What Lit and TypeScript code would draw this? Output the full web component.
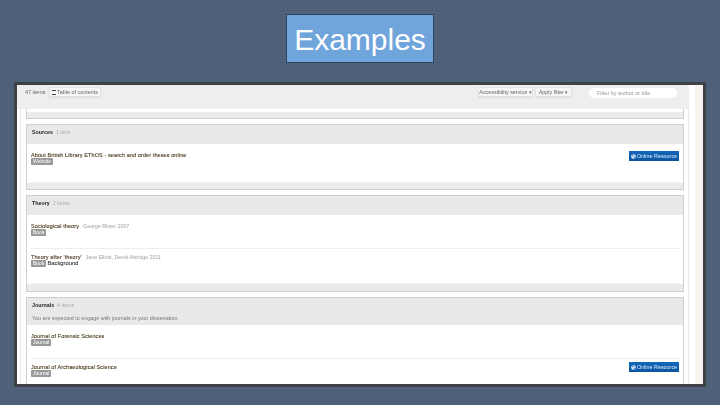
import { LitElement, html, css, svg } from "lit";
import { customElement } from "lit/decorators.js";

const globe = svg`<svg class="globe" viewBox="0 0 10 10" aria-hidden="true"><circle cx="5" cy="5" r="4.6" fill="#e8f2fb"/><path d="M3 1.5 L5.4 2.4 L4.6 4.2 L2.4 4.6 Z M5.6 5 L8 5.6 L6.6 8.6 L5.4 7.4 Z" fill="#1560ad"/></svg>`;

interface Item { title: string; meta?: string; tag: string; note?: string; link?: boolean; h: number; }

@customElement("app-root")
export class AppRoot extends LitElement {
  static styles = css`
    :host { display: block; width: 720px; height: 405px; overflow: hidden; background: #4f6179; font-family: "Liberation Sans", Arial, sans-serif; }
    .title { box-sizing: border-box; width: 148px; height: 49px; margin: 14px auto 0; background: #6fa5db; border: 1px solid #2e4560; color: #fff; font-size: 30px; line-height: 49px; text-align: center; }
    .frame { box-sizing: border-box; display: flex; width: 692px; height: 305px; margin: 19px 0 0 14px; border: 3px solid #3e4145; overflow: hidden; background: #fff; }
    .main { width: 672px; flex: none; filter: blur(0.4px); }
    .gutter { flex: 1; display: flex; }
    .gutter .w { width: 6px; background: #fff; }
    .gutter .c { flex: 1; background: #f9f4ee; }
    .top { box-sizing: border-box; height: 24px; background: #eeeeee; display: flex; align-items: flex-start; padding: 2px 12px 0 8px; color: #666; font-size: 5.4px; }
    .count { margin: 1.5px 3px 0 0; line-height: 7px; width: 21px; white-space: nowrap; }
    .btn { box-sizing: border-box; height: 10px; line-height: 9px; background: #f6f6f6; border: 1px solid #e2e2e2; border-radius: 1px; color: #666; text-align: center; white-space: nowrap; box-shadow: 0 1px 1px #ddd; }
    .toc { width: 52px; }
    .toc i { display: inline-block; width: 4px; height: 3px; border-top: 1px solid #444; border-bottom: 1px solid #444; margin-right: 1px; vertical-align: -0.5px; }
    .spacer { flex: 1; }
    .b1 { width: 55px; margin-right: 2px; }
    .b2 { width: 37px; }
    .filter { box-sizing: border-box; width: 88px; height: 10px; margin: 1px 0 0 17px; background: #fff; border-radius: 5px; padding-left: 8px; line-height: 10px; color: #999; font-size: 5.5px; white-space: nowrap; }
    .content { height: 275px; overflow: hidden; background: #fff; margin-left: 3px; border-left: 1px solid #e8e8e8; border-right: 1px solid #e8e8e8; padding: 0 4px 0 5px; display: flex; flex-direction: column; gap: 5px; }
    .stub { box-sizing: border-box; height: 10px; padding-top: 3px; border: 1px solid #cfcfcf; border-top: 0; flex: none; background: linear-gradient(#fff 3px, #ebebeb 3px); }
    .card { flex: none; box-sizing: border-box; border: 1px solid #cfcfcf; background: #fff; }
    .head { background: #e9e9e9; padding: 0 5px; height: 19px; line-height: 14.5px; color: #222; font-size: 5.3px; font-weight: bold; white-space: nowrap; }
    .head span { font-weight: normal; color: #aaa; margin-left: 3px; }
    .head.tall { height: 27px; }
    .head p { margin: 0; font-weight: normal; color: #777; line-height: 8px; margin-top: 1px; font-size: 5.4px; }
    .foot { height: 6px; background: #ebebeb; }
    .foot.big { height: 7px; }
    .row { box-sizing: border-box; margin: 0 3px 0 4px; display: flex; justify-content: space-between; align-items: flex-start; border-bottom: 1px solid #eeeeee; padding-top: 7px; }
    .row + .row { padding-top: 4px; }
    .row + .row .res { margin-top: -1px; }
    .row:last-of-type { border-bottom: 0; }
    .t { font-size: 5.5px; line-height: 8px; color: #4f4023; font-weight: normal; white-space: nowrap; letter-spacing: .1px; height: 7px; -webkit-text-stroke: 0.12px #4f4023; }
    .t span { color: #a0a0a0; margin-left: 4px; letter-spacing: 0; font-size: 5.3px; -webkit-text-stroke: 0; }
    .l { display: flex; align-items: center; gap: 1px; font-size: 5.8px; color: #333; line-height: 7px; -webkit-text-stroke: 0.08px #333; }
    .tag { background: #999; color: #fff; font-size: 5px; line-height: 7px; padding: 0 2px; border-radius: 1px; -webkit-text-stroke: 0; }
    .res { box-sizing: border-box; width: 50px; height: 10px; margin-right: 1px; background: linear-gradient(#1468bd, #0b559f); color: #dfeefc; font-size: 5.4px; line-height: 10px; display: flex; align-items: center; justify-content: center; gap: 1px; white-space: nowrap; }
    .globe { width: 5px; height: 5px; }
  `;

  private row(i: Item) {
    return html`<div class="row" style="height:${i.h}px">
      <div>
        <div class="t">${i.title}${i.meta ? html`<span>${i.meta}</span>` : ""}</div>
        <div class="l"><span class="tag">${i.tag}</span>${i.note ?? ""}</div>
      </div>
      ${i.link ? html`<div class="res">${globe}Online Resource</div>` : ""}
    </div>`;
  }

  render() {
    return html`
      <div class="title">Examples</div>
      <div class="frame">
        <div class="main">
          <div class="top">
            <div class="count">47 items</div>
            <div class="btn toc"><i></i>Table of contents</div>
            <div class="spacer"></div>
            <div class="btn b1">Accessibility service ▾</div>
            <div class="btn b2">Apply filter ▾</div>
            <div class="filter">Filter by author or title</div>
          </div>
          <div class="content">
            <div class="stub"></div>
            <div class="card">
              <div class="head">Sources<span>1 item</span></div>
              ${this.row({ title: "About British Library EThOS - search and order theses online", tag: "Website", link: true, h: 39 })}
              <div class="foot"></div>
            </div>
            <div class="card">
              <div class="head">Theory<span>2 items</span></div>
              ${this.row({ title: "Sociological theory", meta: "George Ritzer 2007", tag: "Book", h: 34 })}
              ${this.row({ title: "Theory after 'theory'", meta: "Jane Elliott, Derek Attridge 2011", tag: "Book", note: "Background", h: 35 })}
              <div class="foot big"></div>
            </div>
            <div class="card">
              <div class="head tall">Journals<span>4 items</span><p>You are expected to engage with journals in your dissertation</p></div>
              ${this.row({ title: "Journal of Forensic Sciences", tag: "Journal", h: 34 })}
              ${this.row({ title: "Journal of Archaeological Science", tag: "Journal", link: true, h: 40 })}
            </div>
          </div>
        </div>
        <div class="gutter"><div class="w"></div><div class="c"></div></div>
      </div>`;
  }
}
